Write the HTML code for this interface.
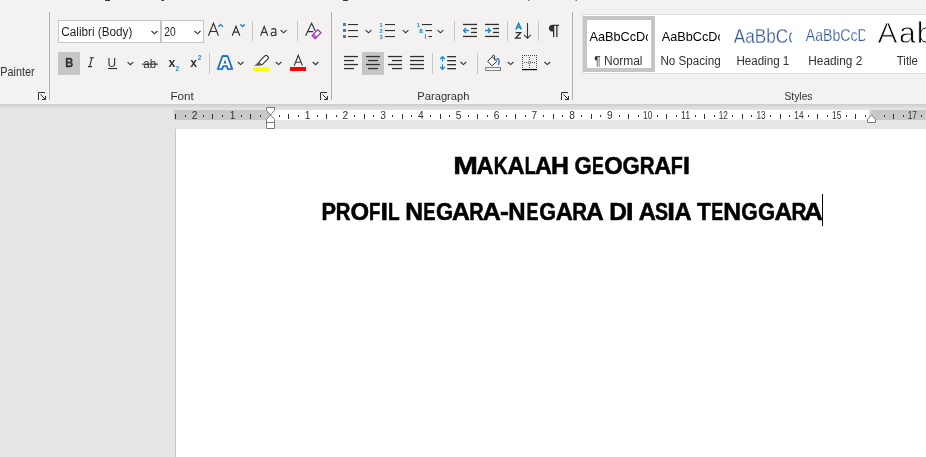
<!DOCTYPE html>
<html><head><meta charset="utf-8">
<style>
html,body{margin:0;padding:0;background:#e6e6e6;overflow:hidden;}
svg{display:block;will-change:transform;font-family:"Liberation Sans",sans-serif;}
</style></head>
<body>
<svg width="926" height="457" viewBox="0 0 926 457">
<rect x="0" y="0" width="926" height="457" fill="#e6e6e6"/>
<rect x="0" y="0" width="926" height="104" fill="#f3f2f1"/>
<rect x="0" y="103" width="926" height="1" fill="#f6f5f4"/>
<rect x="0" y="104" width="926" height="1" fill="#cfcecd"/>
<rect x="0" y="105" width="926" height="1" fill="#d4d4d4"/>
<rect x="0" y="106" width="926" height="1" fill="#d9d9d9"/>
<rect x="0" y="107" width="926" height="1" fill="#dddddd"/>
<rect x="0" y="108" width="926" height="1" fill="#e1e1e1"/>
<rect x="0" y="109" width="926" height="1" fill="#e4e4e4"/>
<g fill="#3a3a3a"><rect x="105" y="0" width="5" height="1"/><rect x="161.5" y="0" width="2.5" height="1"/><rect x="343" y="0" width="5" height="1"/></g>
<g fill="#777"><rect x="528" y="0" width="1.5" height="1"/><rect x="575.5" y="0" width="1.5" height="1"/></g>
<g fill="#b3b1af"><rect x="49" y="12" width="1" height="88"/><rect x="331" y="12" width="1" height="88"/><rect x="572" y="12" width="1" height="88"/></g>
<text x="0.3" y="76" font-size="12" fill="#323130" textLength="34.2" lengthAdjust="spacingAndGlyphs">Painter</text>
<g fill="none" stroke="#323130" stroke-width="1"><path d="M38.5 100V92.5H45"/><path d="M40.5 94.5l5 5M45.5 96v3.5h-3.5"/></g>
<rect x="58.5" y="20.5" width="102" height="22" fill="#fff" stroke="#c8c6c4"/>
<rect x="161.5" y="20.5" width="42" height="22" fill="#fff" stroke="#c8c6c4"/>
<text x="61.3" y="36" font-size="12.5" fill="#201f1e" textLength="71" lengthAdjust="spacingAndGlyphs">Calibri (Body)</text>
<text x="164.2" y="36" font-size="12.5" fill="#201f1e" textLength="11.4" lengthAdjust="spacingAndGlyphs">20</text>
<path d="M151.5 31l3.0 2.8 3.0 -2.8" fill="none" stroke="#323130" stroke-width="1.1"/>
<path d="M194.5 31l3.0 2.8 3.0 -2.8" fill="none" stroke="#323130" stroke-width="1.1"/>
<path d="M208.4 35.7L213.45 23.3 218.5 35.7M210.3 31.5h6.3" fill="none" stroke="#323130" stroke-width="1.15"/>
<path d="M218.3 26.8l2.3-2.3 2.3 2.3" fill="none" stroke="#2b88d8" stroke-width="1.5"/>
<path d="M232.2 35.7L236 26.3 239.8 35.7M233.6 32.1h4.8" fill="none" stroke="#323130" stroke-width="1.15"/>
<path d="M240.4 24.4l2.2 2.1 2.2-2.1" fill="none" stroke="#2b88d8" stroke-width="1.5"/>
<rect x="252" y="21" width="1" height="20" fill="#c8c6c4"/>
<path d="M260.6 35.7L264.2 26.6 267.8 35.7M261.9 32.4h4.6" fill="none" stroke="#323130" stroke-width="1.15"/>
<path d="M271.2 29.4c1-0.6 1.7-0.8 2.4-0.8 1.4 0 2.3 0.8 2.3 2.2v5M275.9 32.2h-2.2c-1.6 0-2.6 0.6-2.6 1.8 0 1.1 0.8 1.7 1.8 1.7 1.5 0 2.6-1 3-1.9" fill="none" stroke="#323130" stroke-width="1.1"/>
<path d="M280.6 30.2l3.0 2.6 3.0 -2.6" fill="none" stroke="#323130" stroke-width="1.1"/>
<rect x="297" y="21" width="1" height="20" fill="#c8c6c4"/>
<path d="M305.6 35.7L311.6 23.3 315.3 31M308 31.6h5.2" fill="none" stroke="#323130" stroke-width="1.15"/>
<path d="M311.9 35.6L317.8 29.7 321 32.8 315.1 38.7z" fill="#fff" stroke="#a740b0" stroke-width="1.3" stroke-linejoin="round"/>
<path d="M312.3 35.6l2-2 3.1 3.1-2 2z" fill="#a740b0" opacity="0.75"/>
<rect x="58" y="52" width="22" height="23" fill="#c8c6c4"/>
<text x="65.2" y="66.9" font-size="13.6" font-weight="bold" fill="#323130" stroke="#323130" stroke-width="0.3" textLength="8" lengthAdjust="spacingAndGlyphs">B</text>
<path d="M89.6 57.7h4.4M91.9 57.7L89.6 66.6M87.9 66.6h4.2" fill="none" stroke="#323130" stroke-width="1.1"/>
<text x="107.6" y="66.5" font-size="13" fill="#323130" textLength="8.6" lengthAdjust="spacingAndGlyphs">U</text>
<rect x="108" y="68" width="9" height="1.1" fill="#323130"/>
<path d="M127.6 62.1l2.8 2.6 2.8 -2.6" fill="none" stroke="#323130" stroke-width="1.1"/>
<text x="143.3" y="67.9" font-size="12" fill="#323130" textLength="12.8" lengthAdjust="spacingAndGlyphs">ab</text>
<rect x="142" y="63.6" width="16" height="1.1" fill="#323130"/>
<text x="168.4" y="66.8" font-size="12" font-weight="bold" fill="#323130" textLength="6.8" lengthAdjust="spacingAndGlyphs">x</text>
<text x="175.6" y="70.8" font-size="7" font-weight="bold" fill="#1e8bcd" textLength="3.6" lengthAdjust="spacingAndGlyphs">2</text>
<text x="190.3" y="66.8" font-size="12" font-weight="bold" fill="#323130" textLength="6.8" lengthAdjust="spacingAndGlyphs">x</text>
<text x="197.7" y="59.8" font-size="7" font-weight="bold" fill="#1e8bcd" textLength="3.6" lengthAdjust="spacingAndGlyphs">2</text>
<rect x="209" y="53" width="1" height="21" fill="#c8c6c4"/>
<path d="M222.6 56.1h4.9l4.6 12.9h-4.3l-0.9-3h-3.8l-0.9 3h-4.3z" fill="none" stroke="#a8cdf0" stroke-width="2.6" stroke-linejoin="round"/>
<path d="M222.6 56.1h4.9l4.6 12.9h-4.3l-0.9-3h-3.8l-0.9 3h-4.3z" fill="#fff" stroke="#1469c7" stroke-width="1.6" stroke-linejoin="round"/>
<path d="M225 59.4l-1.5 4h3z" fill="#1469c7"/>
<path d="M237.8 62l2.8 2.6 2.8 -2.6" fill="none" stroke="#323130" stroke-width="1.1"/>
<g transform="rotate(-45 263.6 60.2)"><rect x="258.6" y="58.1" width="10.6" height="4.2" rx="1.6" fill="#fff" stroke="#323130" stroke-width="1.2"/></g>
<path d="M254.2 65.8l4.2-3.9 2.9 2.9-1.1 1z" fill="#605e5c"/>
<rect x="253" y="67" width="16" height="4" fill="#ffff00"/>
<path d="M275.8 62l2.8 2.6 2.8 -2.6" fill="none" stroke="#323130" stroke-width="1.1"/>
<path d="M294.2 65.6L298.3 55.4 302.4 65.6M295.6 62.2h5.4" fill="none" stroke="#323130" stroke-width="1.15"/>
<rect x="290" y="67" width="16" height="4" fill="#ff0000"/>
<path d="M312.7 62l2.9 2.7 2.9 -2.7" fill="none" stroke="#323130" stroke-width="1.1"/>
<text x="170.5" y="100" font-size="11.7" fill="#323130" textLength="23.3" lengthAdjust="spacingAndGlyphs">Font</text>
<g fill="none" stroke="#323130" stroke-width="1"><path d="M320.5 100V92.5H327"/><path d="M322.5 94.5l5 5M327.5 96v3.5h-3.5"/></g>
<g fill="#1e8bcd"><rect x="343" y="23" width="3" height="3"/><rect x="343" y="29" width="3" height="3"/><rect x="343" y="35" width="3" height="3"/></g>
<g fill="#323130"><rect x="348" y="24" width="10" height="1.1"/><rect x="348" y="30" width="10" height="1.1"/><rect x="348" y="36" width="10" height="1.1"/></g>
<path d="M365.7 30.2l2.8 2.6 2.8 -2.6" fill="none" stroke="#323130" stroke-width="1.1"/>
<g fill="#1e8bcd" font-size="5.8" font-weight="bold"><text x="379.6" y="27.2">1</text><text x="379.6" y="33.2">2</text><text x="379.6" y="39.2">3</text></g>
<g fill="#323130"><rect x="385" y="24" width="10" height="1.1"/><rect x="385" y="30" width="10" height="1.1"/><rect x="385" y="36" width="10" height="1.1"/></g>
<path d="M402.8 30.2l2.8 2.6 2.8 -2.6" fill="none" stroke="#323130" stroke-width="1.1"/>
<g fill="#1e8bcd" font-size="5.8" font-weight="bold"><text x="416.8" y="27.2">1</text><text x="419.3" y="33.2" font-size="6.5">a</text><text x="424.6" y="39.2" font-size="6.5">i</text></g>
<g fill="#323130"><rect x="422" y="24" width="10" height="1.1"/><rect x="425.5" y="30" width="6.5" height="1.1"/><rect x="428.4" y="36" width="3.6" height="1.1"/></g>
<path d="M437.6 30.2l2.8 2.6 2.8 -2.6" fill="none" stroke="#323130" stroke-width="1.1"/>
<rect x="454" y="21" width="1" height="20" fill="#c8c6c4"/>
<g fill="#323130"><rect x="463" y="23.8" width="14" height="1.3"/><rect x="471" y="27.9" width="6" height="1.3"/><rect x="471" y="31.8" width="6" height="1.3"/><rect x="463" y="35.8" width="14" height="1.3"/><rect x="485" y="23.8" width="14" height="1.3"/><rect x="493" y="27.9" width="6" height="1.3"/><rect x="493" y="31.8" width="6" height="1.3"/><rect x="485" y="35.8" width="14" height="1.3"/></g>
<g fill="none" stroke="#1e8bcd" stroke-width="1.4"><path d="M463.6 30.5h5.3M465.9 28.1l-2.3 2.4 2.3 2.4"/><path d="M485 30.5h5.3M488 28.1l2.3 2.4-2.3 2.4"/></g>
<rect x="507" y="21" width="1" height="20" fill="#c8c6c4"/>
<path d="M515.9 29.5L518.6 23.5 521.3 29.5M516.8 27.5h3.6" fill="none" stroke="#1e8bcd" stroke-width="1.7"/>
<path d="M515.6 32.7h5.1l-5.1 5.5h5.4" fill="none" stroke="#323130" stroke-width="1.3"/>
<path d="M527.5 23v15.2M524.1 34.8l3.4 3.5 3.4-3.5" fill="none" stroke="#323130" stroke-width="1.1"/>
<rect x="538" y="21" width="1" height="20" fill="#c8c6c4"/>
<path d="M559 24.8H552.6C550.4 24.8 548.9 26.3 548.9 28.2 548.9 30.1 550.4 31.6 552.6 31.6H553V37H554.3V26.1H556.2V37H557.5V26.1H559z" fill="#323130"/>
<rect x="362" y="52" width="22" height="23" fill="#c8c6c4"/>
<g fill="#323130"><rect x="344" y="55.9" width="14" height="1.3"/><rect x="344" y="59.9" width="10" height="1.3"/><rect x="344" y="63.9" width="14" height="1.3"/><rect x="344" y="67.9" width="10" height="1.3"/><rect x="366" y="55.9" width="14" height="1.3"/><rect x="368" y="59.9" width="10" height="1.3"/><rect x="366" y="63.9" width="14" height="1.3"/><rect x="368" y="67.9" width="10" height="1.3"/><rect x="388" y="55.9" width="14" height="1.3"/><rect x="392" y="59.9" width="10" height="1.3"/><rect x="388" y="63.9" width="14" height="1.3"/><rect x="392" y="67.9" width="10" height="1.3"/><rect x="410" y="55.9" width="14" height="1.3"/><rect x="410" y="59.9" width="14" height="1.3"/><rect x="410" y="63.9" width="14" height="1.3"/><rect x="410" y="67.9" width="14" height="1.3"/><rect x="447.2" y="56" width="8.8" height="1.3"/><rect x="447.2" y="60" width="8.8" height="1.3"/><rect x="447.2" y="64" width="8.8" height="1.3"/><rect x="447.2" y="68" width="8.8" height="1.3"/></g>
<rect x="432" y="53" width="1" height="21" fill="#c8c6c4"/>
<path d="M442.5 56.6v5M440.1 59l2.4-2.4 2.4 2.4M442.5 64.2v5M440.1 66.9l2.4 2.4 2.4-2.4" fill="none" stroke="#1e8bcd" stroke-width="1.25"/>
<path d="M460.6 62l2.8 2.6 2.8 -2.6" fill="none" stroke="#323130" stroke-width="1.1"/>
<rect x="477" y="53" width="1" height="21" fill="#c8c6c4"/>
<path d="M487.6 61.4L492.2 56.8 496.8 61.2 492.2 65.8z" fill="#fff" stroke="#323130" stroke-width="1.0" stroke-linejoin="round"/>
<path d="M492.4 57V56.4c0-0.7 0.5-1.2 1.1-1.2 0.6 0 1.1 0.5 1.1 1.2V60.3" fill="none" stroke="#323130" stroke-width="1.0"/>
<path d="M496.6 59.7c0.5-1.2 1.8-1.4 2.3 0 0.4 1.1 0.1 3.2-0.3 5.2" fill="none" stroke="#1e6fc9" stroke-width="1.3"/>
<rect x="485.7" y="67.6" width="14.8" height="2.8" fill="#fff" stroke="#7a7876" stroke-width="1"/>
<path d="M507.7 62l2.9 2.6 2.9 -2.6" fill="none" stroke="#323130" stroke-width="1.1"/>
<g fill="#4a4948"><rect x="522" y="55" width="1" height="1"/><rect x="524" y="55" width="1" height="1"/><rect x="526" y="55" width="1" height="1"/><rect x="528" y="55" width="1" height="1"/><rect x="530" y="55" width="1" height="1"/><rect x="532" y="55" width="1" height="1"/><rect x="534" y="55" width="1" height="1"/><rect x="536" y="55" width="1" height="1"/><rect x="522" y="57" width="1" height="1"/><rect x="536" y="57" width="1" height="1"/><rect x="522" y="59" width="1" height="1"/><rect x="536" y="59" width="1" height="1"/><rect x="522" y="61" width="1" height="1"/><rect x="536" y="61" width="1" height="1"/><rect x="522" y="63" width="1" height="1"/><rect x="536" y="63" width="1" height="1"/><rect x="522" y="65" width="1" height="1"/><rect x="536" y="65" width="1" height="1"/><rect x="522" y="67" width="1" height="1"/><rect x="536" y="67" width="1" height="1"/><rect x="529" y="57" width="1" height="1"/><rect x="529" y="59" width="1" height="1"/><rect x="529" y="65" width="1" height="1"/><rect x="529" y="67" width="1" height="1"/><rect x="524" y="62" width="1" height="1"/><rect x="526" y="62" width="1" height="1"/><rect x="532" y="62" width="1" height="1"/><rect x="534" y="62" width="1" height="1"/></g>
<circle cx="529.5" cy="62.5" r="1.2" fill="#fff" stroke="#4a4948" stroke-width="0.8"/>
<rect x="522" y="69" width="15" height="1.2" fill="#000"/>
<path d="M544.4 62l2.9 2.6 2.9 -2.6" fill="none" stroke="#323130" stroke-width="1.1"/>
<text x="417.3" y="100" font-size="11.7" fill="#323130" textLength="52.2" lengthAdjust="spacingAndGlyphs">Paragraph</text>
<g fill="none" stroke="#323130" stroke-width="1"><path d="M561.5 100V92.5H568"/><path d="M563.5 94.5l5 5M568.5 96v3.5h-3.5"/></g>
<rect x="582.5" y="14.5" width="360" height="59" fill="#fff" stroke="#e1dfdd"/>
<rect x="585" y="18" width="68" height="52" fill="none" stroke="#c8c6c4" stroke-width="4"/>
<clipPath id="c1"><rect x="587" y="20" width="61" height="48"/></clipPath>
<clipPath id="c2"><rect x="657" y="20" width="63" height="48"/></clipPath>
<clipPath id="c3"><rect x="729" y="20" width="63" height="48"/></clipPath>
<clipPath id="c4"><rect x="801" y="20" width="64" height="48"/></clipPath>
<text clip-path="url(#c1)" x="589.5" y="41.1" font-size="12.8" fill="#000" textLength="62" lengthAdjust="spacingAndGlyphs">AaBbCcDc</text>
<text x="594.3" y="65" font-size="12" fill="#323130" textLength="48.2" lengthAdjust="spacingAndGlyphs">¶ Normal</text>
<text clip-path="url(#c2)" x="661.8" y="41.1" font-size="12.8" fill="#000" textLength="62" lengthAdjust="spacingAndGlyphs">AaBbCcDc</text>
<text x="660.4" y="65" font-size="12" fill="#323130" textLength="60.3" lengthAdjust="spacingAndGlyphs">No Spacing</text>
<text clip-path="url(#c3)" x="733.8" y="42.8" font-size="19.3" fill="#2f559f" stroke="#fff" stroke-width="0.3" textLength="63" lengthAdjust="spacingAndGlyphs">AaBbCc</text>
<text x="736.4" y="65" font-size="12" fill="#323130" textLength="52.9" lengthAdjust="spacingAndGlyphs">Heading 1</text>
<text clip-path="url(#c4)" x="805.8" y="41.3" font-size="16.5" fill="#2f559f" stroke="#fff" stroke-width="0.25" textLength="62" lengthAdjust="spacingAndGlyphs">AaBbCcD</text>
<text x="808.3" y="65" font-size="12" fill="#323130" textLength="54" lengthAdjust="spacingAndGlyphs">Heading 2</text>
<text y="43" font-size="30" fill="#000" stroke="#fff" stroke-width="0.8"><tspan x="877.6">A</tspan><tspan x="899">a</tspan><tspan x="916.8">b</tspan></text>
<text x="896.8" y="65" font-size="12" fill="#323130" textLength="21.2" lengthAdjust="spacingAndGlyphs">Title</text>
<text x="784.5" y="100" font-size="11.7" fill="#323130" textLength="28" lengthAdjust="spacingAndGlyphs">Styles</text>
<rect x="174" y="110" width="752" height="10" fill="#c8c8c8"/>
<rect x="270" y="110" width="599" height="10" fill="#fff"/>
<g fill="#323130" font-size="10.2"><rect x="175" y="114" width="1" height="5"/><rect x="185" y="115" width="1" height="2"/><text x="194.6" y="119" text-anchor="middle">2</text><rect x="203" y="115" width="1" height="2"/><rect x="212" y="114" width="1" height="5"/><rect x="222" y="115" width="1" height="2"/><text x="232.6" y="119" text-anchor="middle">1</text><rect x="241" y="115" width="1" height="2"/><rect x="250" y="114" width="1" height="5"/><rect x="260" y="115" width="1" height="2"/><rect x="279" y="115" width="1" height="2"/><rect x="288" y="114" width="1" height="5"/><rect x="298" y="115" width="1" height="2"/><text x="307.5" y="119" text-anchor="middle">1</text><rect x="317" y="115" width="1" height="2"/><rect x="326" y="114" width="1" height="5"/><rect x="336" y="115" width="1" height="2"/><text x="345.3" y="119" text-anchor="middle">2</text><rect x="354" y="115" width="1" height="2"/><rect x="364" y="114" width="1" height="5"/><rect x="373" y="115" width="1" height="2"/><text x="383.1" y="119" text-anchor="middle">3</text><rect x="392" y="115" width="1" height="2"/><rect x="402" y="114" width="1" height="5"/><rect x="411" y="115" width="1" height="2"/><text x="420.9" y="119" text-anchor="middle">4</text><rect x="430" y="115" width="1" height="2"/><rect x="440" y="114" width="1" height="5"/><rect x="449" y="115" width="1" height="2"/><text x="458.7" y="119" text-anchor="middle">5</text><rect x="468" y="115" width="1" height="2"/><rect x="477" y="114" width="1" height="5"/><rect x="487" y="115" width="1" height="2"/><text x="496.5" y="119" text-anchor="middle">6</text><rect x="506" y="115" width="1" height="2"/><rect x="515" y="114" width="1" height="5"/><rect x="525" y="115" width="1" height="2"/><text x="534.3" y="119" text-anchor="middle">7</text><rect x="543" y="115" width="1" height="2"/><rect x="553" y="114" width="1" height="5"/><rect x="562" y="115" width="1" height="2"/><text x="572.1" y="119" text-anchor="middle">8</text><rect x="581" y="115" width="1" height="2"/><rect x="591" y="114" width="1" height="5"/><rect x="600" y="115" width="1" height="2"/><text x="609.9" y="119" text-anchor="middle">9</text><rect x="619" y="115" width="1" height="2"/><rect x="628" y="114" width="1" height="5"/><rect x="638" y="115" width="1" height="2"/><text x="643.1" y="119" textLength="9.2" lengthAdjust="spacingAndGlyphs">10</text><rect x="657" y="115" width="1" height="2"/><rect x="666" y="114" width="1" height="5"/><rect x="676" y="115" width="1" height="2"/><text x="680.9" y="119" textLength="9.2" lengthAdjust="spacingAndGlyphs">11</text><rect x="695" y="115" width="1" height="2"/><rect x="704" y="114" width="1" height="5"/><rect x="714" y="115" width="1" height="2"/><text x="718.7" y="119" textLength="9.2" lengthAdjust="spacingAndGlyphs">12</text><rect x="732" y="115" width="1" height="2"/><rect x="742" y="114" width="1" height="5"/><rect x="751" y="115" width="1" height="2"/><text x="756.5" y="119" textLength="9.2" lengthAdjust="spacingAndGlyphs">13</text><rect x="770" y="115" width="1" height="2"/><rect x="780" y="114" width="1" height="5"/><rect x="789" y="115" width="1" height="2"/><text x="794.3" y="119" textLength="9.2" lengthAdjust="spacingAndGlyphs">14</text><rect x="808" y="115" width="1" height="2"/><rect x="817" y="114" width="1" height="5"/><rect x="827" y="115" width="1" height="2"/><text x="832.1" y="119" textLength="9.2" lengthAdjust="spacingAndGlyphs">15</text><rect x="846" y="115" width="1" height="2"/><rect x="855" y="114" width="1" height="5"/><rect x="865" y="115" width="1" height="2"/><rect x="884" y="115" width="1" height="2"/><rect x="893" y="114" width="1" height="5"/><rect x="903" y="115" width="1" height="2"/><text x="907.7" y="119" textLength="9.2" lengthAdjust="spacingAndGlyphs">17</text><rect x="921" y="115" width="1" height="2"/></g>
<path d="M266.5 107.5h8v3l-4 4.5 4 4.5v9h-8v-9l4-4.5-4-4.5z" fill="#fff" stroke="#7a7a7a" stroke-width="1"/>
<rect x="266.5" y="122" width="8" height="1" fill="#7a7a7a"/>
<rect x="869" y="110" width="2" height="10" fill="#dedede"/>
<path d="M867.5 122.5V119.2L871.5 115 875.5 119.2V122.5z" fill="#fff" stroke="#7a7a7a" stroke-width="1"/>
<rect x="175" y="129" width="751" height="328" fill="#fff"/>
<rect x="175" y="129" width="1" height="328" fill="#c6c6c6"/>
<g font-size="24.6" font-weight="bold" fill="#000" stroke="#000" stroke-width="0.55"><text transform="translate(453.22 173.9) scale(1.204 1)">M</text><text transform="translate(476.61 173.9) scale(0.963 1)">A</text><text transform="translate(493.71 173.9) scale(0.781 1)">K</text><text transform="translate(507.51 173.9) scale(0.963 1)">A</text><text transform="translate(524.71 173.9) scale(0.721 1)">L</text><text transform="translate(535.02 173.9) scale(0.945 1)">A</text><text transform="translate(550.94 173.9) scale(1.009 1)">H</text><text transform="translate(574.39 173.9) scale(0.897 1)">G</text><text transform="translate(591.92 173.9) scale(0.717 1)">E</text><text transform="translate(604.23 173.9) scale(0.965 1)">O</text><text transform="translate(622.39 173.9) scale(0.897 1)">G</text><text transform="translate(639.73 173.9) scale(0.834 1)">R</text><text transform="translate(654.32 173.9) scale(0.945 1)">A</text><text transform="translate(670.78 173.9) scale(0.802 1)">F</text><text transform="translate(683.03 173.9) scale(1.016 1)">I</text><text transform="translate(321.44 219.9) scale(0.883 1)">P</text><text transform="translate(335.84 219.9) scale(0.827 1)">R</text><text transform="translate(350.42 219.9) scale(0.971 1)">O</text><text transform="translate(369.06 219.9) scale(0.754 1)">F</text><text transform="translate(380.49 219.9) scale(1.101 1)">I</text><text transform="translate(388.12 219.9) scale(0.777 1)">L</text><text transform="translate(405.25 219.9) scale(1.002 1)">N</text><text transform="translate(423.37 219.9) scale(0.746 1)">E</text><text transform="translate(435.99 219.9) scale(0.897 1)">G</text><text transform="translate(452.08 219.9) scale(1.006 1)">A</text><text transform="translate(469.26 219.9) scale(0.814 1)">R</text><text transform="translate(482.67 219.9) scale(1.018 1)">A</text><text transform="translate(500.06 219.9) scale(1.088 1)">-</text><text transform="translate(508.29 219.9) scale(0.975 1)">N</text><text transform="translate(526.61 219.9) scale(0.725 1)">E</text><text transform="translate(539.21 219.9) scale(0.879 1)">G</text><text transform="translate(555.71 219.9) scale(0.963 1)">A</text><text transform="translate(572.24 219.9) scale(0.827 1)">R</text><text transform="translate(585.89 219.9) scale(1.000 1)">A</text><text transform="translate(609.16 219.9) scale(0.995 1)">D</text><text transform="translate(625.99 219.9) scale(1.101 1)">I</text><text transform="translate(638.81 219.9) scale(0.963 1)">A</text><text transform="translate(655.03 219.9) scale(0.794 1)">S</text><text transform="translate(667.14 219.9) scale(1.129 1)">I</text><text transform="translate(674.61 219.9) scale(0.963 1)">A</text><text transform="translate(696.95 219.9) scale(0.918 1)">T</text><text transform="translate(711.19 219.9) scale(0.732 1)">E</text><text transform="translate(723.25 219.9) scale(1.002 1)">N</text><text transform="translate(741.13 219.9) scale(0.861 1)">G</text><text transform="translate(757.99 219.9) scale(0.897 1)">G</text><text transform="translate(774.49 219.9) scale(0.994 1)">A</text><text transform="translate(791.62 219.9) scale(0.840 1)">R</text><text transform="translate(803.95 219.9) scale(1.060 1)">A</text></g>
<rect x="822" y="194" width="1" height="32" fill="#000"/>
</svg>
</body></html>
